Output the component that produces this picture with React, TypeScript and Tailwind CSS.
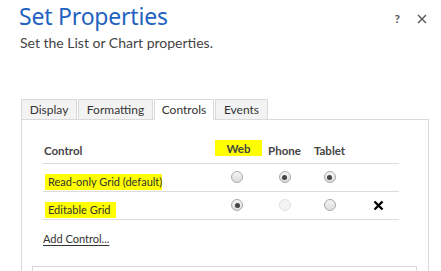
import React from "react";

type RadioState = "on" | "off" | "disabled";

const Radio = ({ state }: { state: RadioState }) => {
  if (state === "disabled") {
    return (
      <span className="w-[12px] h-[12px] rounded-full border border-[#e0e0e0] bg-[#f3f3f3] inline-block" />
    );
  }
  return (
    <span className="w-[12px] h-[12px] rounded-full border border-[#a9a9a9] bg-gradient-to-b from-[#f4f4f4] to-[#dcdcdc] flex items-center justify-center">
      {state === "on" && <span className="w-[5px] h-[5px] rounded-full bg-[#444]" />}
    </span>
  );
};

const tabs = [
  { label: "Display", w: "w-[56px]" },
  { label: "Formatting", w: "w-[75px]" },
  { label: "Controls", w: "w-[60px]" },
  { label: "Events", w: "w-[53px]" },
];

const rows: { name: string; hl: string; web: RadioState; phone: RadioState; tablet: RadioState; remove?: boolean }[] = [
  { name: "Read-only Grid (default)", hl: "w-[117px]", web: "off", phone: "on", tablet: "on" },
  { name: "Editable Grid", hl: "w-[71px]", web: "on", phone: "disabled", tablet: "off", remove: true },
];

export default function App() {
  return (
    <div
      className="w-[441px] h-[271px] bg-white overflow-hidden text-[#333]"
      style={{ fontFamily: 'Lato, "Noto Sans", sans-serif' }}
    >
      {/* header */}
      <div className="flex justify-between pl-[19px] pr-[14px] pt-[1px]">
        <div>
          <h1
            className="text-[23px] leading-[30px] text-[#1f62c0] tracking-[-0.2px]"
            style={{ fontFamily: '"Noto Sans", sans-serif' }}
          >
            Set Properties
          </h1>
          <p className="text-[14px] leading-[17px] text-[#444] mt-[3px] ml-[1px]">
            Set the List or Chart properties.
          </p>
        </div>
        <div className="flex items-center gap-[17px] h-[18px] mt-[9px] text-[#555]">
          <span className="text-[12px] font-bold">?</span>
          <svg width="10" height="10" viewBox="0 0 10 10">
            <path d="M1 1 L9 9 M9 1 L1 9" stroke="#555" strokeWidth="1.4" />
          </svg>
        </div>
      </div>

      {/* tabs */}
      <div className="mt-[48px] ml-[21px] mr-[12px]">
        <div className="flex items-end">
          {tabs.map((t) => {
            const active = t.label === "Controls";
            return (
              <div
                key={t.label}
                className={`h-[21px] ${t.w} mr-[1px] text-center text-[12px] leading-[20px] border border-[#d9d9d9] ${
                  active ? "bg-white border-b-white relative z-10" : "bg-[#f3f3f3]"
                }`}
              >
                {t.label}
              </div>
            );
          })}
        </div>

        {/* panel */}
        <div className="-mt-px border border-[#d9d9d9] h-[200px] pl-[21px] pr-[29px] pt-[18px]">
          <div className="grid grid-cols-[172px_47px_45px_45px_1fr] items-center border-b border-[#dcdcdc] h-[26px] text-[11.5px] font-bold text-[#444]">
            <span className="pl-[1px] pt-[1px]">Control</span>
            <span className="bg-[#ffff00] h-[16px] leading-[18px] text-center self-start mt-[2px]">Web</span>
            <span className="text-center">Phone</span>
            <span className="text-center">Tablet</span>
            <span />
          </div>
          {rows.map((r) => (
            <div
              key={r.name}
              className="grid grid-cols-[172px_47px_45px_45px_1fr] items-center border-b border-[#dcdcdc] h-[28px] text-[11px] text-[#333]"
            >
              <span className={`bg-[#ffff00] h-[16px] leading-[16px] pl-[3px] ml-[2px] mt-[8px] whitespace-nowrap ${r.hl}`}>
                {r.name}
              </span>
              <span className="flex justify-center pr-[3px] -mt-[1px]">
                <Radio state={r.web} />
              </span>
              <span className="flex justify-center -mt-[1px]">
                <Radio state={r.phone} />
              </span>
              <span className="flex justify-center -mt-[1px]">
                <Radio state={r.tablet} />
              </span>
              <span className="flex justify-center pl-[6px] -mt-[1px]">
                {r.remove && (
                  <svg width="11" height="11" viewBox="0 0 11 11">
                    <path d="M1.5 1.5 L9.5 9.5 M9.5 1.5 L1.5 9.5" stroke="#000" strokeWidth="2.4" />
                  </svg>
                )}
              </span>
            </div>
          ))}
          <div className="mt-[5px]">
            <a className="text-[11px] text-[#333] underline underline-offset-[2px] cursor-pointer">Add Control...</a>
          </div>
          <div className="-ml-[11px] -mr-[18px] mt-[17px] border border-[#d9d9d9] h-[40px]" />
        </div>
      </div>
    </div>
  );
}
